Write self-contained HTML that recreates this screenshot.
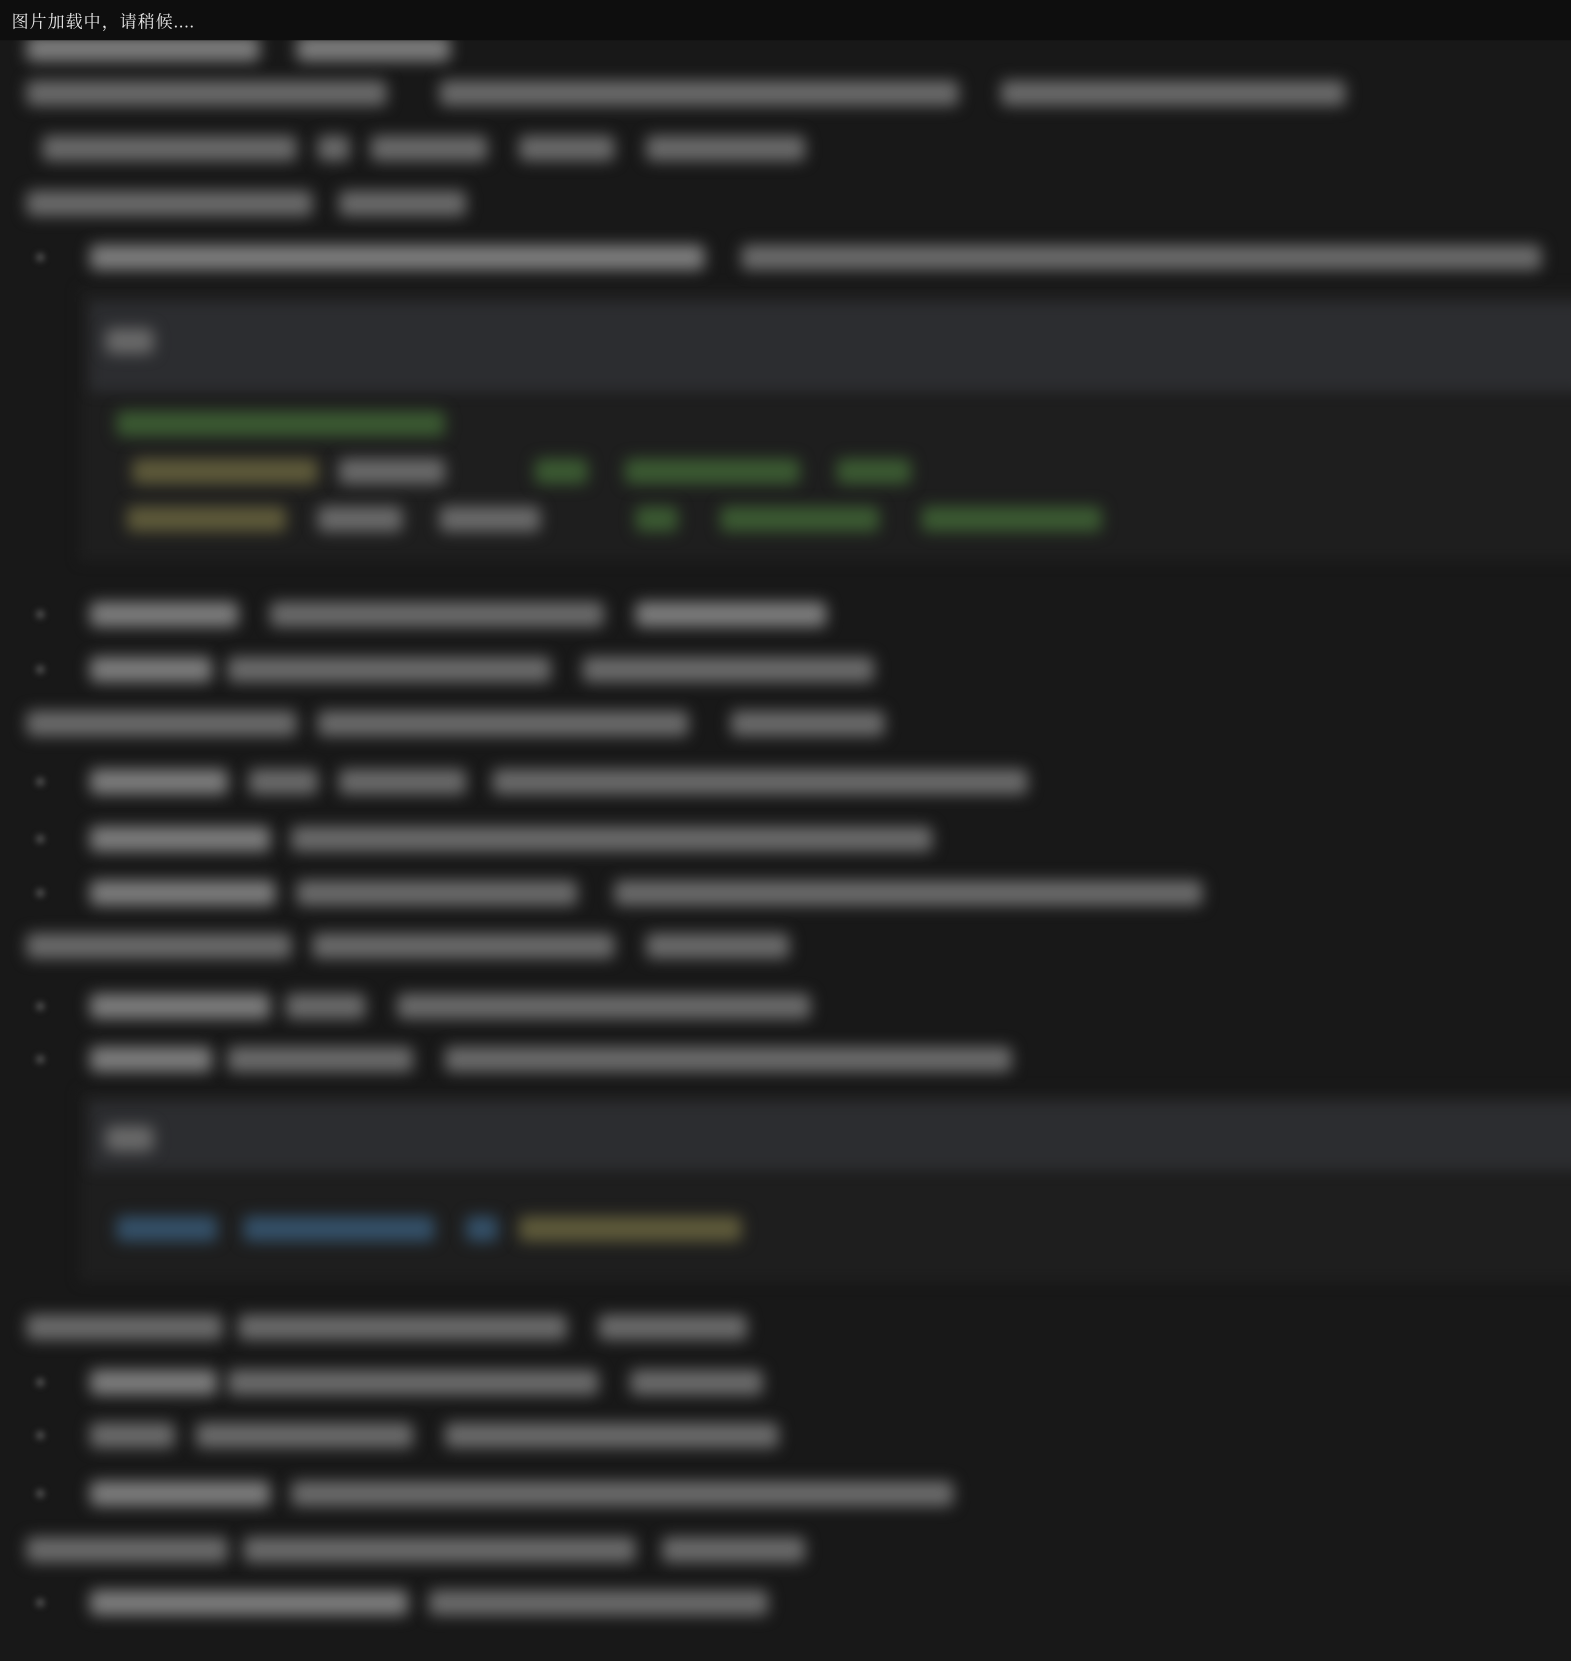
<!DOCTYPE html>
<html><head><meta charset="utf-8"><style>
html,body{margin:0;padding:0;background:#181818;width:1571px;height:1661px;overflow:hidden}
#w{position:absolute;left:0;top:0;width:1483px;height:1568px;transform:scale(1.0593);transform-origin:0 0}
.bar{position:absolute;left:0;top:0;width:1483px;height:38px;background:#0e0e0e;z-index:5}
.bar span{position:absolute;left:11px;top:8px;color:#e8e8e8;font:16px "Liberation Serif","Noto Serif CJK SC",serif;letter-spacing:1px}
.bl{position:absolute;filter:blur(6px)}
.b{position:absolute;height:24px;margin-top:-2px;background:#6a6a6a;filter:blur(7px);border-radius:5px}
.h{background:#7c7c7c}
.g{background:#3b5a32}
.y{background:#5e5a3a}
.u{background:#345068}
.d{position:absolute;width:8px;height:8px;background:#555;border-radius:50%;filter:blur(3px)}
</style></head><body><div id="w">
<div class="bar"><span>图片加载中，请稍候....</span></div>
<div class="bl" style="left:75px;top:272px;width:1420px;height:258px;background:#1e1e1e"></div>
<div class="bl" style="left:85px;top:285px;width:1410px;height:85px;background:#2c2d30"></div>
<div class="bl" style="left:75px;top:1030px;width:1420px;height:180px;background:#1e1e1e"></div>
<div class="bl" style="left:85px;top:1040px;width:1410px;height:65px;background:#2c2d30"></div>

<div class="b h" style="left:25px;top:36px;width:220px"></div><div class="b h" style="left:280px;top:36px;width:145px"></div>
<div class="b" style="left:25px;top:78px;width:340px"></div><div class="b" style="left:415px;top:78px;width:490px"></div><div class="b" style="left:945px;top:78px;width:325px"></div>
<div class="b" style="left:40px;top:130px;width:240px"></div><div class="b" style="left:300px;top:130px;width:30px"></div><div class="b" style="left:350px;top:130px;width:110px"></div><div class="b" style="left:490px;top:130px;width:90px"></div><div class="b" style="left:610px;top:130px;width:150px"></div>
<div class="b" style="left:25px;top:182px;width:270px"></div><div class="b" style="left:320px;top:182px;width:120px"></div>
<div class="d" style="left:34px;top:239px"></div><div class="b h" style="left:85px;top:233px;width:580px"></div><div class="b" style="left:700px;top:233px;width:755px"></div>
<div class="b" style="left:100px;top:312px;width:45px"></div>
<div class="b g" style="left:110px;top:390px;width:310px"></div>
<div class="b y" style="left:125px;top:435px;width:175px"></div><div class="b" style="left:320px;top:435px;width:100px"></div><div class="b g" style="left:505px;top:435px;width:50px"></div><div class="b g" style="left:590px;top:435px;width:165px"></div><div class="b g" style="left:790px;top:435px;width:70px"></div>
<div class="b y" style="left:120px;top:480px;width:150px"></div><div class="b" style="left:300px;top:480px;width:80px"></div><div class="b" style="left:415px;top:480px;width:95px"></div><div class="b g" style="left:600px;top:480px;width:40px"></div><div class="b g" style="left:680px;top:480px;width:150px"></div><div class="b g" style="left:870px;top:480px;width:170px"></div>
<div class="d" style="left:34px;top:576px"></div><div class="b h" style="left:85px;top:570px;width:140px"></div><div class="b" style="left:255px;top:570px;width:315px"></div><div class="b h" style="left:600px;top:570px;width:180px"></div>
<div class="d" style="left:34px;top:628px"></div><div class="b h" style="left:85px;top:622px;width:115px"></div><div class="b" style="left:215px;top:622px;width:305px"></div><div class="b" style="left:550px;top:622px;width:275px"></div>
<div class="b" style="left:25px;top:673px;width:255px"></div><div class="b" style="left:300px;top:673px;width:350px"></div><div class="b" style="left:690px;top:673px;width:145px"></div>
<div class="d" style="left:34px;top:734px"></div><div class="b h" style="left:85px;top:728px;width:130px"></div><div class="b" style="left:235px;top:728px;width:65px"></div><div class="b" style="left:320px;top:728px;width:120px"></div><div class="b" style="left:465px;top:728px;width:505px"></div>
<div class="d" style="left:34px;top:788px"></div><div class="b h" style="left:85px;top:782px;width:170px"></div><div class="b" style="left:275px;top:782px;width:605px"></div>
<div class="d" style="left:34px;top:839px"></div><div class="b h" style="left:85px;top:833px;width:175px"></div><div class="b" style="left:280px;top:833px;width:265px"></div><div class="b" style="left:580px;top:833px;width:555px"></div>
<div class="b" style="left:25px;top:883px;width:250px"></div><div class="b" style="left:295px;top:883px;width:285px"></div><div class="b" style="left:610px;top:883px;width:135px"></div>
<div class="d" style="left:34px;top:946px"></div><div class="b h" style="left:85px;top:940px;width:170px"></div><div class="b" style="left:270px;top:940px;width:75px"></div><div class="b" style="left:375px;top:940px;width:390px"></div>
<div class="d" style="left:34px;top:996px"></div><div class="b h" style="left:85px;top:990px;width:115px"></div><div class="b" style="left:215px;top:990px;width:175px"></div><div class="b" style="left:420px;top:990px;width:535px"></div>
<div class="b" style="left:100px;top:1065px;width:45px"></div>
<div class="b u" style="left:110px;top:1150px;width:95px"></div><div class="b u" style="left:230px;top:1150px;width:180px"></div><div class="b u" style="left:440px;top:1150px;width:30px"></div><div class="b y" style="left:490px;top:1150px;width:210px"></div>
<div class="b" style="left:25px;top:1243px;width:185px"></div><div class="b" style="left:225px;top:1243px;width:310px"></div><div class="b" style="left:565px;top:1243px;width:140px"></div>
<div class="d" style="left:34px;top:1301px"></div><div class="b h" style="left:85px;top:1295px;width:120px"></div><div class="b" style="left:215px;top:1295px;width:350px"></div><div class="b" style="left:595px;top:1295px;width:125px"></div>
<div class="d" style="left:34px;top:1351px"></div><div class="b" style="left:85px;top:1345px;width:80px"></div><div class="b" style="left:185px;top:1345px;width:205px"></div><div class="b" style="left:420px;top:1345px;width:315px"></div>
<div class="d" style="left:34px;top:1406px"></div><div class="b h" style="left:85px;top:1400px;width:170px"></div><div class="b" style="left:275px;top:1400px;width:625px"></div>
<div class="b" style="left:25px;top:1453px;width:190px"></div><div class="b" style="left:230px;top:1453px;width:370px"></div><div class="b" style="left:625px;top:1453px;width:135px"></div>
<div class="d" style="left:34px;top:1509px"></div><div class="b h" style="left:85px;top:1503px;width:300px"></div><div class="b" style="left:405px;top:1503px;width:320px"></div>
</div></body></html>
